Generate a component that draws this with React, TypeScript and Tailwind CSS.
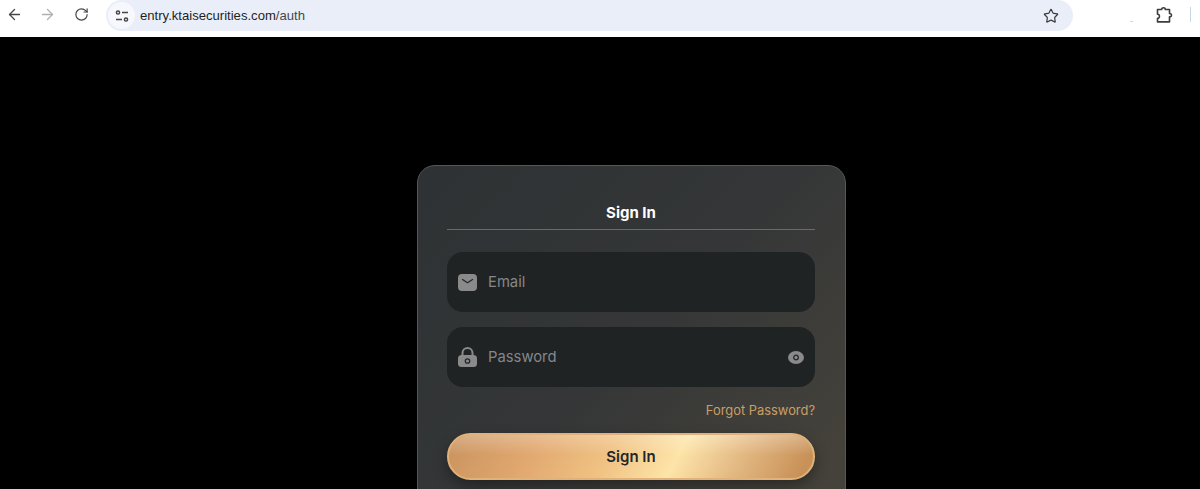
import React from "react";
import { ArrowLeft, ArrowRight, RotateCw, Star } from "lucide-react";

function Tune() {
  return (
    <svg width="14" height="14" viewBox="0 0 14 14" fill="none" stroke="#474747" strokeWidth="1.5">
      <circle cx="3" cy="3.5" r="1.6" />
      <path d="M7 3.5h6" />
      <path d="M1 10.5h6" />
      <circle cx="11" cy="10.5" r="1.6" />
    </svg>
  );
}

function Extension() {
  return (
    <svg width="18" height="18" viewBox="0 0 18 18" fill="none" stroke="#3c3c3c" strokeWidth="1.6" strokeLinejoin="round">
      <path d="M1.5 3.5h4.2c-.2-2.4 3.8-2.4 3.6 0h4.2v4c2.6-.3 2.6 3.7 0 3.4v5H1.5v-3.6c2.6.3 2.6-4.4 0-4.1z" />
    </svg>
  );
}

function MailIcon() {
  return (
    <svg width="19" height="17" viewBox="0 0 19 17">
      <rect x="0" y="0" width="19" height="17" rx="4" fill="#8a8a8a" />
      <path d="M4.5 5.5l5 3.2 5-3.2" fill="none" stroke="#24282a" strokeWidth="1.3" strokeLinecap="round" strokeLinejoin="round" />
    </svg>
  );
}

function LockIcon() {
  return (
    <svg width="19" height="20" viewBox="0 0 19 20">
      <path d="M4.5 9V6a5 5 0 0 1 10 0v3" fill="none" stroke="#8a8a8a" strokeWidth="2" />
      <rect x="0" y="8" width="19" height="12" rx="3.5" fill="#8a8a8a" />
      <circle cx="9.5" cy="14" r="2.2" fill="none" stroke="#24282a" strokeWidth="1.3" />
    </svg>
  );
}

function EyeIcon() {
  return (
    <svg width="16" height="13" viewBox="0 0 16 13">
      <ellipse cx="8" cy="6.5" rx="8" ry="6.5" fill="#8a8a8a" />
      <circle cx="8" cy="6.5" r="2.3" fill="none" stroke="#24282a" strokeWidth="1.3" />
    </svg>
  );
}

function Field({ icon, label, trailing }: { icon: React.ReactNode; label: string; trailing?: React.ReactNode }) {
  return (
    <div className="flex h-[60px] items-center rounded-[16px] bg-[#1f2324] pl-[11px] pr-[11px]">
      <div className="flex w-[19px] items-center justify-center">{icon}</div>
      <span className="ml-[11px] flex-1 text-[14.8px] text-[#85878a]">{label}</span>
      {trailing}
    </div>
  );
}

export default function App() {
  return (
    <div className="flex h-[489px] w-[1200px] flex-col overflow-hidden bg-black font-['Inter',sans-serif]">
      <div className="flex h-[37px] shrink-0 items-start bg-white">
        <div className="flex h-[29px] items-center pl-[6px]">
          <ArrowLeft size={17} color="#474747" strokeWidth={1.8} />
          <ArrowRight size={17} color="#b0b0b0" strokeWidth={1.8} className="ml-[16px]" />
          <RotateCw size={15} color="#474747" strokeWidth={1.9} className="ml-[18px]" />
        </div>
        <div className="ml-[17px] flex h-[31px] w-[967px] items-center rounded-full bg-[#e9eef9] pl-[2px] pr-[14px]">
          <div className="flex h-[27px] w-[27px] items-center justify-center rounded-full bg-[#f6f8fd]">
            <Tune />
          </div>
          <span className="ml-[5px] flex-1 font-['Liberation_Sans',sans-serif] text-[13.1px] text-[#1f1f1f]">
            entry.ktaisecurities.com<span className="text-[#474747]">/auth</span>
          </span>
          <Star size={16} color="#3c3c3c" strokeWidth={1.8} />
        </div>
        <div className="ml-[57px] mt-[21px] h-px w-[3px] bg-[#c7d7f0]" />
        <div className="ml-[23px] mt-[6px]">
          <Extension />
        </div>
        <div className="ml-[16px] mt-[7px] h-[15px] w-px bg-[#c7d7f0]" />
      </div>

      <div className="flex justify-center pl-[63px] pt-[128px]">
        <div className="h-[520px] w-[429px] shrink-0 rounded-[18px] border border-[#55585a] bg-[linear-gradient(135deg,#2e3234_0%,#343637_40%,#45423b_75%,#3f3d38_100%)] pl-[29px] pr-[30px]">
          <div className="flex h-[64px] items-end justify-center border-b border-[#6a6a6a] pb-[5px] text-[15px] font-bold text-white">
            Sign In
          </div>
          <div className="mt-[22px] flex flex-col gap-[15px]">
            <Field icon={<MailIcon />} label="Email" />
            <Field icon={<LockIcon />} label="Password" trailing={<EyeIcon />} />
          </div>
          <div className="mt-[15px] text-right text-[12.9px] leading-[18px] text-[#c99f66]">Forgot Password?</div>
          <button className="relative mt-[13px] flex h-[47px] w-full items-center justify-center overflow-hidden rounded-full border-2 border-[#e0b27a] bg-[linear-gradient(118deg,#c9935f_0%,#e0a66e_22%,#f0c283_44%,#fde4a8_62%,#e4ba84_78%,#c89158_96%)] pt-px text-[15px] font-semibold text-[#23262a] shadow-[0_6px_14px_rgba(0,0,0,0.35)]">
            <span className="absolute inset-x-0 top-0 h-[20px] bg-gradient-to-b from-white/25 to-transparent" />
            <span className="relative">Sign In</span>
          </button>
        </div>
      </div>
    </div>
  );
}
